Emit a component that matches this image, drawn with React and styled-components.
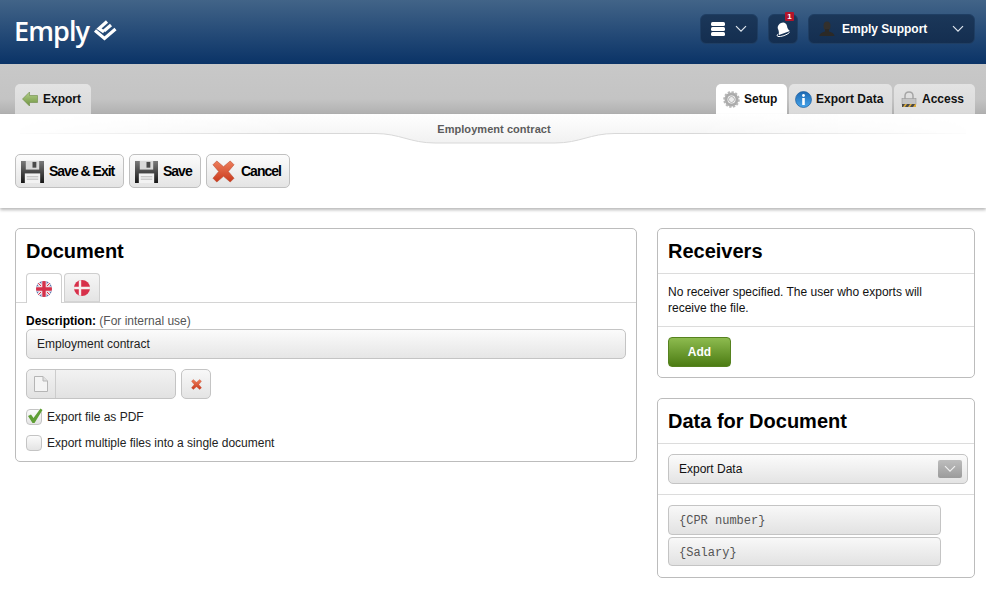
import React from "react";
import styled, { createGlobalStyle } from "styled-components";

const Global = createGlobalStyle`
  html, body { margin: 0; padding: 0; background: #fff; }
  body { font-family: "Liberation Sans", Arial, sans-serif; color: #000; }
`;

const LogoMark = () => (
  <svg width="24" height="21" viewBox="0 0 24 21">
    <g fill="none" stroke="#fff" strokeWidth="3.200" strokeLinejoin="miter">
      <path d="M14 1.500 L6 8.500 L11 12" />
      <path d="M18 5 L11 11" />
      <path d="M2 10.500 L11.500 18.500 L22.500 9" />
    </g>
  </svg>
);

const Chevron = ({ color = "#dfe6ee", size = 12 }) => (
  <svg width={size} height={size * 0.6} viewBox="0 0 12 7">
    <path d="M1 1 L6 6 L11 1" fill="none" stroke={color} strokeWidth="1.200" />
  </svg>
);

const StackIcon = () => (
  <svg width="14" height="14" viewBox="0 0 14 14">
    <rect x="0" y="0" width="14" height="4" rx="1.500" fill="#fff" />
    <rect x="0" y="5" width="14" height="4" rx="1.500" fill="#fff" />
    <rect x="0" y="10" width="14" height="4" rx="1.500" fill="#fff" />
  </svg>
);

const BellIcon = () => (
  <svg width="15" height="15" viewBox="0 0 15 15">
    <path d="M5 1 C7.500 -0.500 10.500 1 11 4 C11.300 6.500 12.500 8 14 9 L3 13 C3 11 2.800 8.500 2 7 C1 5 2.500 2 5 1Z" fill="#fff" />
    <path d="M2.500 12 C1 12.500 0.700 14 2 14.500 C5 15 11 13 13.500 10.500" fill="none" stroke="#fff" strokeWidth="1" />
  </svg>
);

const PersonIcon = () => (
  <svg width="16" height="16" viewBox="0 0 16 16">
    <ellipse cx="8" cy="5" rx="3.500" ry="4.500" fill="#33302c" />
    <path d="M6 8 L10 8 L10 10.500 C12.500 11.500 15 12 15.500 15 L0.500 15 C1 12 3.500 11.500 6 10.500Z" fill="#2b2926" />
  </svg>
);

const ArrowIcon = () => (
  <svg width="16" height="16" viewBox="0 0 16 16">
    <defs>
      <linearGradient id="arrowFill" x1="0" y1="0" x2="0" y2="1">
        <stop offset="0" stopColor="#b4cf8a" />
        <stop offset="1" stopColor="#6f9440" />
      </linearGradient>
    </defs>
    <path d="M0.500 8 L7.500 1 L7.500 4.500 L15.500 4.500 L15.500 11.500 L7.500 11.500 L7.500 15 Z" fill="url(#arrowFill)" stroke="#6d8a48" strokeWidth="0.600" />
  </svg>
);

const GearIcon = () => (
  <svg width="17" height="17" viewBox="0 0 17 17">
    <circle cx="8.500" cy="8.500" r="5.500" fill="none" stroke="#ababab" strokeWidth="3" />
    <circle cx="8.500" cy="8.500" r="7.300" fill="none" stroke="#b8b8b8" strokeWidth="2" strokeDasharray="2.300 1.500" />
    <circle cx="8.500" cy="8.500" r="3" fill="#ececec" stroke="#a0a0a0" strokeWidth="0.800" />
  </svg>
);

const InfoIcon = () => (
  <svg width="17" height="17" viewBox="0 0 17 17">
    <defs>
      <linearGradient id="infoFill" x1="0" y1="0" x2="0" y2="1">
        <stop offset="0" stopColor="#1c68b2" />
        <stop offset="1" stopColor="#46a4ea" />
      </linearGradient>
    </defs>
    <circle cx="8.500" cy="8.500" r="8" fill="url(#infoFill)" stroke="#1f5f9e" strokeWidth="0.700" />
    <circle cx="8.500" cy="4.500" r="1.400" fill="#fff" />
    <rect x="7.200" y="7" width="2.600" height="7" fill="#fff" />
  </svg>
);

const LockIcon = () => (
  <svg width="16" height="17" viewBox="0 0 16 17">
    <path d="M4 8 L4 5 C4 2.500 5.500 1 8 1 C10.500 1 12 2.500 12 5 L12 8" fill="none" stroke="#a6a6a6" strokeWidth="1.500" />
    <rect x="1" y="7.500" width="14" height="6" fill="#c4c4c4" stroke="#999" strokeWidth="0.600" />
    <rect x="1" y="13" width="14" height="3" fill="#4a4a4a" />
    <path d="M2 16 L4 13 L6 13 L4 16Z M7 16 L9 13 L11 13 L9 16Z M12 16 L14 13 L15 13 L15 16Z" fill="#d9a93a" />
  </svg>
);

const FloppyIcon = () => (
  <svg width="23" height="23" viewBox="0 0 24 24">
    <defs>
      <linearGradient id="floppyFill" x1="0" y1="0" x2="0" y2="1">
        <stop offset="0" stopColor="#7a7a7a" />
        <stop offset="1" stopColor="#161616" />
      </linearGradient>
    </defs>
    <path d="M0 1 L24 1 L24 24 L0 24Z" fill="url(#floppyFill)" />
    <rect x="5" y="1" width="14" height="9" fill="#d9d9d9" />
    <rect x="12" y="2" width="4" height="6" fill="#4a4a4a" />
    <rect x="4" y="14" width="16" height="10" fill="#f2f2f2" />
    <path d="M6 17.500 H18 M6 20 H18" stroke="#b5b5b5" strokeWidth="1" />
  </svg>
);

const CrossIcon = ({ size = 23 }) => (
  <svg width={size} height={size} viewBox="0 0 24 24">
    <defs>
      <linearGradient id={`crossFill${size}`} x1="0" y1="0" x2="0" y2="1">
        <stop offset="0" stopColor="#ee7f5c" />
        <stop offset="1" stopColor="#c9391c" />
      </linearGradient>
    </defs>
    <path d="M5 1 L12 7 L19 1 L23 5 L17 12 L23 19 L19 23 L12 17 L5 23 L1 19 L7 12 L1 5Z" fill={`url(#crossFill${size})`} stroke="#b9482c" strokeWidth="0.600" />
  </svg>
);

const UkFlag = () => (
  <svg width="16" height="16" viewBox="0 0 16 16">
    <defs>
      <clipPath id="ukClip"><circle cx="8" cy="8" r="8" /></clipPath>
    </defs>
    <g clipPath="url(#ukClip)">
      <rect width="16" height="16" fill="#4a68a8" />
      <path d="M0 0 L16 16 M16 0 L0 16" stroke="#f0e6ea" strokeWidth="3.400" />
      <path d="M0 0 L16 16 M16 0 L0 16" stroke="#d5304a" strokeWidth="1" />
      <path d="M8 0 V16 M0 8 H16" stroke="#f0e6ea" strokeWidth="5.400" />
      <path d="M8 0 V16 M0 8 H16" stroke="#d5304a" strokeWidth="3.400" />
    </g>
  </svg>
);

const DkFlag = () => (
  <svg width="16" height="16" viewBox="0 0 16 16">
    <defs>
      <clipPath id="dkClip"><circle cx="8" cy="8" r="8" /></clipPath>
    </defs>
    <g clipPath="url(#dkClip)">
      <rect width="16" height="16" fill="#d7304a" />
      <path d="M6 0 V16 M0 8 H16" stroke="#f5f0f0" strokeWidth="2.400" />
    </g>
  </svg>
);

const FileIcon = () => (
  <svg width="14" height="16" viewBox="0 0 14 16">
    <path d="M0.500 0.500 L9 0.500 L13.500 5 L13.500 15.500 L0.500 15.500Z" fill="#f4f4f4" stroke="#b5b5b5" />
    <path d="M9 0.500 L9 5 L13.500 5" fill="#e0e0e0" stroke="#b5b5b5" />
  </svg>
);

const CheckIcon = () => (
  <svg width="16" height="16" viewBox="0 0 16 16">
    <path d="M1 8 L4 6.500 L6.500 10 L13.500 0.500 L15.500 2 L7.500 15 L5.500 15Z" fill="#5f9e35" />
  </svg>
);

const Page = styled.div`
  width: 986px;
  height: 592px;
  overflow: hidden;
  background: #fff;
`;

const TopBar = styled.header`
  height: 64px;
  box-sizing: border-box;
  padding: 14px 11px 0 14px;
  display: flex;
  justify-content: space-between;
  align-items: flex-start;
  background: linear-gradient(#426488, #0a3367);
`;

const Logo = styled.div`
  display: flex;
  align-items: center;
  gap: 4px;
  height: 32px;
  color: #fff;
  font-family: "Open Sans", sans-serif;
  font-size: 27px;
  font-weight: 600;
  letter-spacing: -0.9px;
`;

const TopActions = styled.div`
  display: flex;
  gap: 10px;
`;

const DarkButton = styled.div`
  position: relative;
  width: ${(p) => p.$w}px;
  height: 30px;
  box-sizing: border-box;
  padding: 0 ${(p) => p.$pad || 0}px;
  display: flex;
  align-items: center;
  justify-content: ${(p) => (p.$center ? "center" : "space-between")};
  border-radius: 6px;
  border: 1px solid #1f3e63;
  background: linear-gradient(#1b3759, #142e50);
`;

const Badge = styled.span`
  position: absolute;
  top: -3px;
  right: 3px;
  width: 9px;
  height: 9px;
  border-radius: 1px;
  background: #b3142a;
  color: #fff;
  font-size: 8px;
  font-weight: 700;
  line-height: 9px;
  text-align: center;
`;

const UserName = styled.span`
  flex: 1;
  margin-left: 7px;
  color: #fff;
  font-size: 12px;
  font-weight: 700;
  text-align: left;
`;

const TabBand = styled.nav`
  height: 50px;
  box-sizing: border-box;
  padding: 20px 11px 0 15px;
  display: flex;
  justify-content: space-between;
  align-items: flex-end;
  background: linear-gradient(#c8c8c8 0, #c4c4c4 70%, #b0b0b0 100%);
`;

const TabGroup = styled.div`
  display: flex;
  gap: 2px;
`;

const Tab = styled.div`
  height: 30px;
  width: ${(p) => p.$w}px;
  box-sizing: border-box;
  padding-left: ${(p) => p.$pad || 7}px;
  display: flex;
  align-items: center;
  gap: ${(p) => p.$gap || 4}px;
  border-radius: 5px 5px 0 0;
  background: ${(p) => (p.$active ? "#fff" : "linear-gradient(#e3e3e3, #dadada)")};
  font-size: 12px;
  font-weight: 700;
  color: #111;
`;

const Toolbar = styled.section`
  position: relative;
  height: 94px;
  box-sizing: border-box;
  padding-top: 40px;
  padding-left: 15px;
  display: flex;
  align-items: flex-start;
  gap: 5px;
  background: #fff;
  box-shadow: 0 2px 3px rgba(0, 0, 0, 0.28);
`;

const RibbonArt = styled.svg`
  position: absolute;
  left: 0;
  top: 0;
`;

const RibbonTitle = styled.div`
  position: absolute;
  top: 9px;
  left: 2px;
  right: 0;
  text-align: center;
  font-size: 11px;
  font-weight: 700;
  letter-spacing: 0.05px;
  color: #5c5c5c;
`;

const ToolButton = styled.button`
  position: relative;
  width: ${(p) => p.$w}px;
  height: 34px;
  box-sizing: border-box;
  padding: 0 0 0 5px;
  display: flex;
  align-items: center;
  gap: ${(p) => p.$gap || 5}px;
  border: 1px solid #c0c0c0;
  border-radius: 5px;
  background: linear-gradient(#fcfcfc, #e4e4e4);
  font-family: inherit;
  font-size: 14px;
  font-weight: 700;
  letter-spacing: -1px;
  color: #000;
`;

const Columns = styled.main`
  padding: 20px 11px 0 15px;
  display: flex;
  gap: 20px;
  align-items: flex-start;
`;

const LeftColumn = styled.div`
  width: 622px;
`;

const RightColumn = styled.div`
  width: 318px;
  display: flex;
  flex-direction: column;
  gap: 20px;
`;

const Panel = styled.section`
  box-sizing: border-box;
  height: ${(p) => p.$h}px;
  border: 1px solid #bcbcbc;
  border-radius: 5px;
  background: #fff;
`;

const PanelTitle = styled.h2`
  margin: 0;
  height: ${(p) => (p.$flat ? 44 : 45)}px;
  box-sizing: border-box;
  padding: 10px 10px 0;
  font-size: 20px;
  line-height: 24px;
  font-weight: 700;
  color: #000;
  border-bottom: ${(p) => (p.$flat ? "none" : "1px solid #dcdcdc")};
`;

const LangTabs = styled.div`
  display: flex;
  gap: 2px;
  padding-left: 10px;
  height: 30px;
  box-sizing: border-box;
  border-bottom: 1px solid #d4d4d4;
`;

const LangTab = styled.div`
  width: 36px;
  height: ${(p) => (p.$active ? 30 : 29)}px;
  box-sizing: border-box;
  display: flex;
  align-items: center;
  justify-content: center;
  border: 1px solid #cfcfcf;
  border-bottom: ${(p) => (p.$active ? "none" : "1px solid #d4d4d4")};
  border-radius: 4px 4px 0 0;
  background: ${(p) => (p.$active ? "#fff" : "linear-gradient(#f6f6f6, #e4e4e4)")};
`;

const DocBody = styled.div`
  padding: 10px 10px 0;
`;

const FieldLabel = styled.div`
  font-size: 12px;
  line-height: 16px;
  b { font-weight: 700; }
  span { color: #555; }
`;

const TextField = styled.div`
  height: 30px;
  box-sizing: border-box;
  padding-left: 10px;
  display: flex;
  align-items: center;
  border: 1px solid #c4c4c4;
  border-radius: 5px;
  background: linear-gradient(#fbfbfb, #e6e6e6);
  font-size: 12px;
  color: #222;
`;

const FileRow = styled.div`
  display: flex;
  gap: 5px;
  margin-top: 10px;
`;

const FilePicker = styled.div`
  width: 150px;
  height: 30px;
  box-sizing: border-box;
  display: flex;
  border: 1px solid #c4c4c4;
  border-radius: 5px;
  background: linear-gradient(#f2f2f2, #e2e2e2);
`;

const FileThumb = styled.div`
  width: 28px;
  display: flex;
  align-items: center;
  justify-content: center;
  border-right: 1px solid #cccccc;
`;

const IconButton = styled.div`
  width: 30px;
  height: 30px;
  box-sizing: border-box;
  display: flex;
  align-items: center;
  justify-content: center;
  border: 1px solid #c4c4c4;
  border-radius: 5px;
  background: linear-gradient(#f8f8f8, #e4e4e4);
`;

const CheckRow = styled.label`
  display: flex;
  align-items: center;
  gap: 5px;
  margin-top: ${(p) => p.$top}px;
  font-size: 12px;
  color: #222;
`;

const CheckBox = styled.span`
  position: relative;
  width: 16px;
  height: 16px;
  box-sizing: border-box;
  border: 1px solid #c4c4c4;
  border-radius: 4px;
  background: linear-gradient(#fbfbfb, #e4e4e4);
  svg { position: absolute; left: 0; top: -2px; }
`;

const Section = styled.div`
  padding: ${(p) => p.$pad || "10px"};
  border-bottom: ${(p) => (p.$line ? "1px solid #dcdcdc" : "none")};
  font-size: 12px;
  line-height: 16px;
  color: #111;
`;

const AddButton = styled.button`
  width: 63px;
  height: 30px;
  border: 1px solid #56821f;
  border-radius: 4px;
  background: linear-gradient(#8dbb4f, #4c7c13);
  color: #fff;
  font-family: inherit;
  font-size: 12px;
  font-weight: 700;
  display: block;
`;

const SelectBox = styled.div`
  height: 30px;
  margin-right: -4px;
  box-sizing: border-box;
  padding: 0 5px 0 10px;
  display: flex;
  align-items: center;
  justify-content: space-between;
  border: 1px solid #c4c4c4;
  border-radius: 5px;
  background: linear-gradient(#fbfbfb, #e4e4e4);
  font-size: 12px;
  color: #111;
`;

const SelectArrow = styled.span`
  width: 24px;
  height: 18px;
  display: flex;
  align-items: center;
  justify-content: center;
  border-radius: 2px;
  background: linear-gradient(#bdbdbd, #9b9b9b);
`;

const TokenList = styled.div`
  display: flex;
  flex-direction: column;
  gap: 2px;
`;

const Token = styled.div`
  width: 273px;
  height: ${(p) => p.$h || 30}px;
  box-sizing: border-box;
  padding: 2px 0 0 10px;
  display: flex;
  align-items: center;
  border: 1px solid #c4c4c4;
  border-radius: 4px;
  background: linear-gradient(#f8f8f8, #e2e2e2);
  font-family: "Liberation Mono", monospace;
  font-size: 12px;
  color: #555;
`;

export default function App() {
  return (
    <Page>
      <Global />
      <TopBar>
        <Logo>
          Emply
          <LogoMark />
        </Logo>
        <TopActions>
          <DarkButton $w={58} $pad={10}>
            <StackIcon />
            <Chevron />
          </DarkButton>
          <DarkButton $w={30} $center>
            <BellIcon />
            <Badge>1</Badge>
          </DarkButton>
          <DarkButton $w={167} $pad={10}>
            <PersonIcon />
            <UserName>Emply Support</UserName>
            <Chevron />
          </DarkButton>
        </TopActions>
      </TopBar>

      <TabBand>
        <Tab $w={76} $gap={5}>
          <ArrowIcon />
          Export
        </Tab>
        <TabGroup>
          <Tab $w={71} $active>
            <GearIcon />
            Setup
          </Tab>
          <Tab $w={103} $pad={6}>
            <InfoIcon />
            Export Data
          </Tab>
          <Tab $w={81} $gap={5}>
            <LockIcon />
            Access
          </Tab>
        </TabGroup>
      </TabBand>

      <Toolbar>
        <RibbonArt width="986" height="34" viewBox="0 0 986 34">
          <defs>
            <linearGradient id="ribbonFade" x1="0" y1="0" x2="1" y2="0">
              <stop offset="0" stopColor="#fff" stopOpacity="0" />
              <stop offset="0.3" stopColor="#fff" />
              <stop offset="0.7" stopColor="#fff" />
              <stop offset="1" stopColor="#fff" stopOpacity="0" />
            </linearGradient>
            <mask id="ribbonMask">
              <rect width="986" height="34" fill="url(#ribbonFade)" />
            </mask>
            <linearGradient id="ribbonFill" x1="0" y1="0" x2="0" y2="1">
              <stop offset="0" stopColor="#ffffff" />
              <stop offset="1" stopColor="#f1f1f1" />
            </linearGradient>
          </defs>
          <g mask="url(#ribbonMask)">
            <path d="M20 19.500 L375 19.500 C400 19.500 410 29 435 29 L555 29 C580 29 590 19.500 615 19.500 L966 19.500 L966 0 L20 0Z" fill="url(#ribbonFill)" />
            <path d="M20 19.500 L375 19.500 C400 19.500 410 29 435 29 L555 29 C580 29 590 19.500 615 19.500 L966 19.500" fill="none" stroke="#d8d8d8" strokeWidth="1" />
          </g>
        </RibbonArt>
        <RibbonTitle>Employment contract</RibbonTitle>
        <ToolButton $w={109}>
          <FloppyIcon />
          Save &amp; Exit
        </ToolButton>
        <ToolButton $w={72}>
          <FloppyIcon />
          Save
        </ToolButton>
        <ToolButton $w={84} $gap={6}>
          <CrossIcon />
          Cancel
        </ToolButton>
      </Toolbar>

      <Columns>
        <LeftColumn>
          <Panel $h={234}>
            <PanelTitle $flat>Document</PanelTitle>
            <LangTabs>
              <LangTab $active>
                <UkFlag />
              </LangTab>
              <LangTab>
                <DkFlag />
              </LangTab>
            </LangTabs>
            <DocBody>
              <FieldLabel>
                <b>Description:</b> <span>(For internal use)</span>
              </FieldLabel>
              <TextField>Employment contract</TextField>
              <FileRow>
                <FilePicker>
                  <FileThumb>
                    <FileIcon />
                  </FileThumb>
                </FilePicker>
                <IconButton>
                  <CrossIcon size={11} />
                </IconButton>
              </FileRow>
              <CheckRow $top={10}>
                <CheckBox>
                  <CheckIcon />
                </CheckBox>
                Export file as PDF
              </CheckRow>
              <CheckRow $top={10}>
                <CheckBox />
                Export multiple files into a single document
              </CheckRow>
            </DocBody>
          </Panel>
        </LeftColumn>

        <RightColumn>
          <Panel $h={150}>
            <PanelTitle>Receivers</PanelTitle>
            <Section $line $pad="10px 10px 10px">
              No receiver specified. The user who exports will
              <br />
              receive the file.
            </Section>
            <Section>
              <AddButton>Add</AddButton>
            </Section>
          </Panel>
          <Panel $h={180}>
            <PanelTitle>Data for Document</PanelTitle>
            <Section $line>
              <SelectBox>
                Export Data
                <SelectArrow>
                  <Chevron color="#f0f0f0" />
                </SelectArrow>
              </SelectBox>
            </Section>
            <Section>
              <TokenList>
                <Token>{"{CPR number}"}</Token>
                <Token $h={29}>{"{Salary}"}</Token>
              </TokenList>
            </Section>
          </Panel>
        </RightColumn>
      </Columns>
    </Page>
  );
}
